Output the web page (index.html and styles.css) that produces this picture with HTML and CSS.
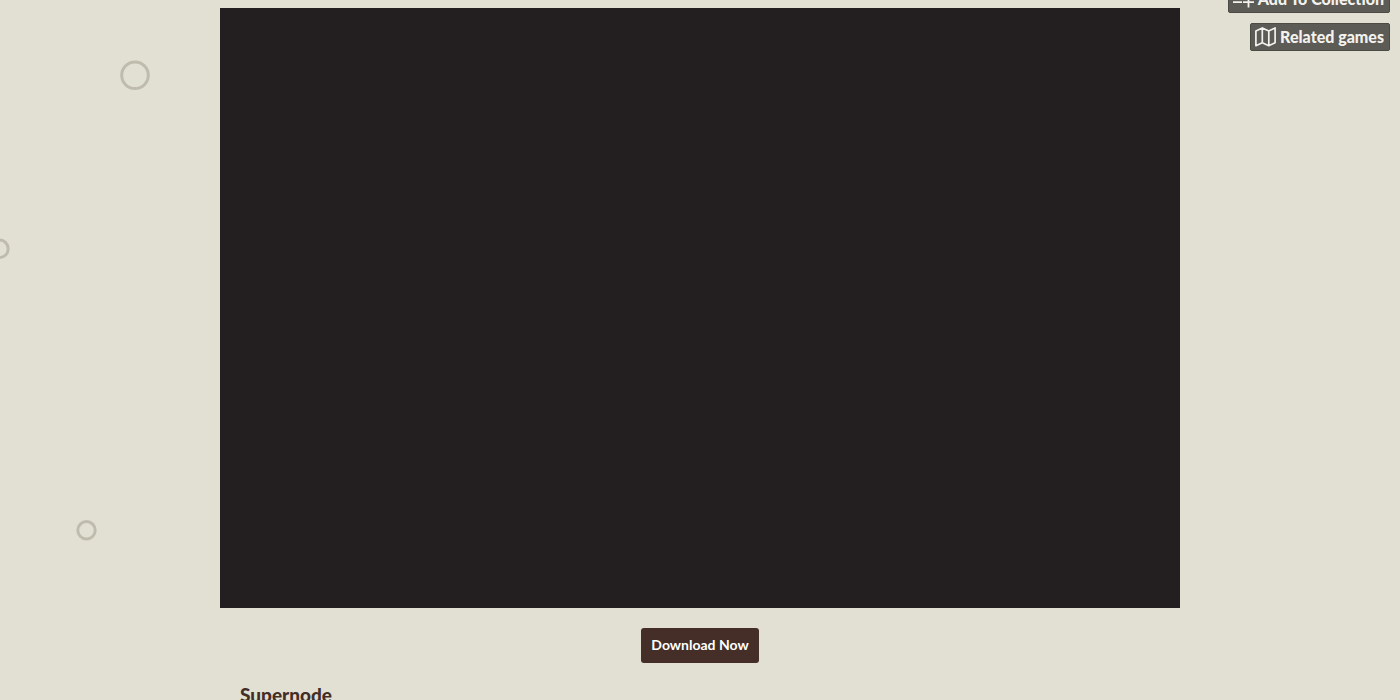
FILE: index.html
```html
<!DOCTYPE html>
<html lang="en">
<head>
<meta charset="utf-8">
<title>Supernode</title>
<link rel="stylesheet" href="styles.css">
</head>
<body>
<svg class="rings" width="160" height="560" viewBox="0 0 160 560" aria-hidden="true">
  <g fill="none" stroke="#bfbcae" stroke-width="3">
    <circle cx="135" cy="75.3" r="13.3"/>
    <circle cx="-.5" cy="248.8" r="8.7"/>
    <circle cx="86.5" cy="530.3" r="8.7"/>
  </g>
</svg>
<nav class="tools" aria-label="Game tools">
  <a class="tool" href="#collection">
    <svg width="21" height="20" viewBox="0 0 21 20" fill="none" stroke="currentColor" stroke-width="1.8" aria-hidden="true"><path d="M0 3h15M0 8h15M0 13.200h9M10 13.200h11M15.500 7.500v11"/></svg>
    <span>Add To Collection</span>
  </a>
  <a class="tool" href="#related">
    <svg width="21" height="20" viewBox="0 0 21 20" fill="none" stroke="currentColor" stroke-width="1.7" stroke-linejoin="round" aria-hidden="true"><path d="M.9 4 7.300.9l6.500 3.100L20.100.9v14.800l-6.300 3-6.500-3-6.400 3zM7.300.9v14.800M13.800 4v14.700"/></svg>
    <span>Related games</span>
  </a>
</nav>
<main class="page">
  <div class="game"></div>
  <div class="actions"><button class="download" type="button">Download Now</button></div>
  <h1 class="title">Supernode</h1>
</main>
</body>
</html>
```
FILE: styles.css
```css
body {
  margin: 0;
  height: 100vh;
  overflow: hidden;
  background: #e2e0d3;
  color: #442e27;
  font-family: Lato, sans-serif;
}
.rings {
  position: absolute;
  top: 0;
  left: 0;
}
.tools {
  position: absolute;
  top: -15px;
  right: 10px;
  display: flex;
  flex-direction: column;
  align-items: flex-end;
  gap: 10px;
}
.tool {
  display: flex;
  align-items: center;
  gap: 4px;
  box-sizing: border-box;
  height: 28px;
  padding: 0 5px 0 4px;
  border: 1px solid #4b4a45;
  border-radius: 2px;
  background: #5c5b55;
  color: #f3f2ee;
  font-size: 16px;
  font-weight: 900;
  line-height: 26px;
  text-decoration: none;
}
.page {
  max-width: 960px;
  margin: 0 auto;
  padding-top: 8px;
}
.game {
  height: 600px;
  background: #231f20;
}
.actions {
  display: flex;
  justify-content: center;
  padding: 20px;
}
.download {
  height: 35px;
  padding: 0 10px 2px;
  border: 0;
  border-radius: 3px;
  background: #442e27;
  color: #fff;
  font: 700 14px/33px Lato, sans-serif;
}
.title {
  margin: 0;
  padding: 0 20px;
  font-size: 19px;
  font-weight: 900;
  line-height: 24px;
}
```
